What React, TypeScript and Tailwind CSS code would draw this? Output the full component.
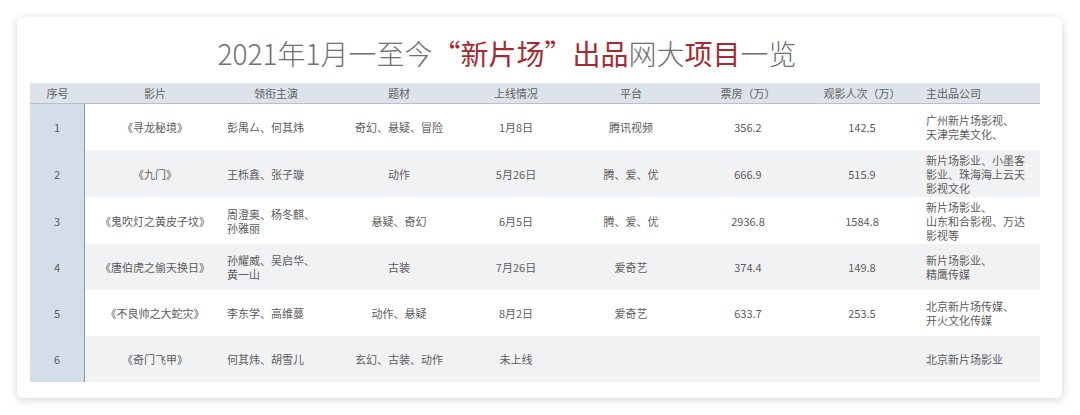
import type { ReactNode } from 'react'

const FONT = { fontFamily: '"Noto Sans CJK SC", "Noto Sans", sans-serif' }

type Row = {
  no: string
  film: string
  cast: ReactNode
  genre: string
  release: string
  platform: string
  box: string
  views: string
  company: ReactNode
  h: string
}

const rows: Row[] = [
  { no: '1', film: '《寻龙秘境》', cast: '彭禺厶、何其炜', genre: '奇幻、悬疑、冒险', release: '1月8日', platform: '腾讯视频', box: '356.2', views: '142.5', company: <>广州新片场影视、<br />天津完美文化、</>, h: 'h-[46px]' },
  { no: '2', film: '《九门》', cast: '王栎鑫、张子璇', genre: '动作', release: '5月26日', platform: '腾、爱、优', box: '666.9', views: '515.9', company: <>新片场影业、小墨客<br />影业、珠海海上云天<br />影视文化</>, h: 'h-[47px]' },
  { no: '3', film: '《鬼吹灯之黄皮子坟》', cast: <>周澄奥、杨冬麒、<br />孙雅丽</>, genre: '悬疑、奇幻', release: '6月5日', platform: '腾、爱、优', box: '2936.8', views: '1584.8', company: <>新片场影业、<br />山东和合影视、万达<br />影视等</>, h: 'h-[47px]' },
  { no: '4', film: '《唐伯虎之偷天换日》', cast: <>孙耀威、吴启华、<br />黄一山</>, genre: '古装', release: '7月26日', platform: '爱奇艺', box: '374.4', views: '149.8', company: <>新片场影业、<br />精鹰传媒</>, h: 'h-[46px]' },
  { no: '5', film: '《不良帅之大蛇灾》', cast: '李东学、高维蔓', genre: '动作、悬疑', release: '8月2日', platform: '爱奇艺', box: '633.7', views: '253.5', company: <>北京新片场传媒、<br />开火文化传媒</>, h: 'h-[46px]' },
  { no: '6', film: '《奇门飞甲》', cast: '何其炜、胡雪儿', genre: '玄幻、古装、动作', release: '未上线', platform: '', box: '', views: '', company: '北京新片场影业', h: 'h-[46px]' },
]

const COLS = 'grid grid-cols-[55px_140px_100px_148px_86px_144px_90px_128px_120px]'

export default function App() {
  return (
    <div className="min-h-[415px] w-[1080px] bg-white pt-[17px] pl-[17px]" style={FONT}>
      <div className="w-[1045px] rounded-md bg-white pl-[13px] pr-[22px] pb-[16px] shadow-[0_2px_10px_rgba(0,0,0,0.18)]">
        <h1 className="flex h-[66px] items-center justify-center pt-[6px] pr-[56px] text-[28px] text-[#707070] font-light">
          <span>2021年1月一至今</span>
          <span className="font-normal text-[#a52a32]">“新片场”出品</span>
          <span>网大</span>
          <span className="font-normal text-[#a52a32]">项目</span>
          <span>一览</span>
        </h1>

        <div className="text-[11px] leading-[14px] text-[#5c5c5c]">
          <div className={`${COLS} h-[21px] items-center border-b border-[#b8c1cb] bg-[#dce3ea] text-[#626262]`}>
            <div className="text-center">序号</div>
            <div className="text-center">影片</div>
            <div className="text-center pl-[2px]">领衔主演</div>
            <div className="text-center">题材</div>
            <div className="text-center">上线情况</div>
            <div className="text-center">平台</div>
            <div className="text-center">票房（万）</div>
            <div className="text-center pl-[10px]">观影人次（万）</div>
            <div className="pl-[5px]">主出品公司</div>
          </div>

          {rows.map((r, i) => (
            <div key={r.no} className={`${COLS} ${r.h} items-center ${i % 2 === 0 ? 'bg-white' : 'bg-[#f1f2f4]'}`}>
              <div className="flex h-full items-center justify-center border-r border-[#8f99a4] bg-[#d4dee8]">{r.no}</div>
              <div className="text-center">{r.film}</div>
              <div className="pl-[2px]">{r.cast}</div>
              <div className="text-center">{r.genre}</div>
              <div className="text-center">{r.release}</div>
              <div className="text-center">{r.platform}</div>
              <div className="text-center">{r.box}</div>
              <div className="text-center pl-[10px]">{r.views}</div>
              <div className="pl-[5px]">{r.company}</div>
            </div>
          ))}
        </div>
      </div>
    </div>
  )
}
